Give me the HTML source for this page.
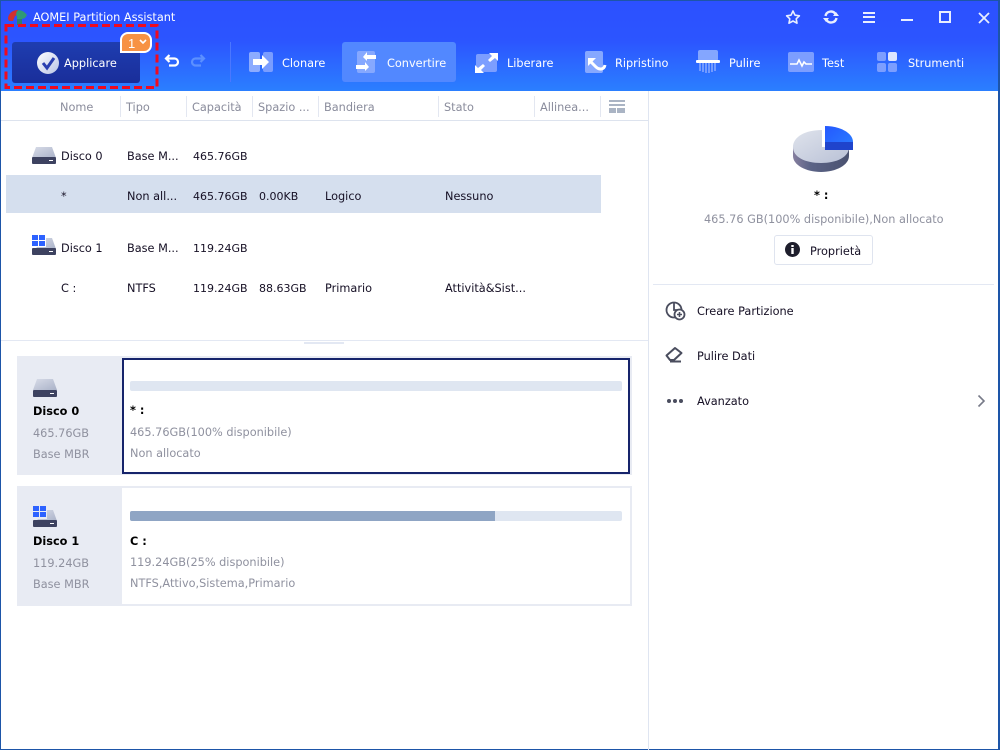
<!DOCTYPE html>
<html><head><meta charset="utf-8"><style>
html,body{margin:0;padding:0;width:1000px;height:750px;overflow:hidden;background:#fff}
body{position:relative;font-family:"DejaVu Sans","Liberation Sans",sans-serif;font-size:11.3px;color:#150f24}
.a,.t,svg{position:absolute}
.t{white-space:nowrap;line-height:16px;margin-top:1px}
.w{color:#fff}.h{color:#8a8c9c}.g{color:#8f919f}.b{font-weight:bold;color:#000}
.n{font-size:11px}
.s{width:1px;top:96px;height:21px;background:#e3e7f1}
</style></head><body>
<div class="a" style="left:0;top:0;width:1000px;height:91px;background:linear-gradient(#2c50ff 0,#2c55ff 45%,#2b7fff 100%)"></div>
<div class="a" style="left:0;top:0;width:1000px;height:1px;background:#1d55a8"></div>
<div class="a" style="left:0;top:0;width:1px;height:750px;background:#1d55a8"></div>
<div class="a" style="left:998px;top:0;width:2px;height:750px;background:#1d55a8"></div>
<div class="a" style="left:0;top:749px;width:1000px;height:1px;background:#1d55a8"></div>

<svg style="left:7px;top:8px" width="20" height="17" viewBox="0 0 20 17"><path d="M1 11C1 6 5 2 11 2L12 6 8 8 6 13 2 13Z" fill="#d0302f"/><path d="M10 3C13 1 17 3 20 7L18 10 15 11V15H10V9L9 6Z" fill="#2f9a75"/><path d="M10 11H15V17H10Z" fill="#2e7f6d"/></svg>
<div class="t w" style="left:33px;top:9px">AOMEI Partition Assistant</div>

<svg style="left:785px;top:9px" width="16" height="16" viewBox="0 0 16 16"><path d="M8 2L10 6.2 14.4 6.8 11.2 9.8 12 14.2 8 12 4 14.2 4.8 9.8 1.6 6.8 6 6.2Z" fill="none" stroke="#e8eeff" stroke-width="1.6" stroke-linejoin="round"/></svg>
<svg style="left:823px;top:9px" width="16" height="16" viewBox="0 0 16 16"><path d="M2.5 7A5.5 5.5 0 0 1 12.5 5M13.5 9A5.5 5.5 0 0 1 3.5 11" fill="none" stroke="#e8eeff" stroke-width="2.4"/><path d="M10 7H16L13 3ZM6 9H0L3 13Z" fill="#e8eeff"/></svg>
<div class="a" style="left:863px;top:12px;width:12px;height:2px;background:#e8eeff;box-shadow:0 4px 0 #e8eeff,0 9px 0 #e8eeff"></div>
<div class="a" style="left:901px;top:19px;width:12px;height:2px;background:#e8eeff"></div>
<div class="a" style="left:939px;top:11px;width:8px;height:8px;border:2px solid #e8eeff"></div>
<svg style="left:977px;top:11px" width="14" height="14" viewBox="0 0 14 14"><path d="M2 2L12 12M12 2L2 12" stroke="#e8eeff" stroke-width="1.8"/></svg>

<div class="a" style="left:12px;top:42px;width:128px;height:41px;border-radius:3px;background:linear-gradient(#1e3db0,#1a2e9a)"></div>
<svg style="left:37px;top:52px" width="22" height="22" viewBox="0 0 22 22"><defs><linearGradient id="c" x1="0" y1="0" x2="1" y2="1"><stop offset="0" stop-color="#fff"/><stop offset="1" stop-color="#b9c4e6"/></linearGradient></defs><circle cx="11" cy="11" r="11" fill="url(#c)"/><path d="M6 11L10 16 17 6" fill="none" stroke="#2a3fb0" stroke-width="3"/></svg>
<div class="t w" style="left:64px;top:55px">Applicare</div>
<div class="a" style="left:120px;top:32px;width:28px;height:17px;background:#f79244;border:2px solid #fff;border-radius:8px 8px 8px 0"></div>
<div class="t w" style="left:128px;top:35px;font-size:13px;font-family:'Liberation Sans',sans-serif">1</div>
<svg style="left:139px;top:39px" width="8" height="6" viewBox="0 0 8 6"><path d="M1 1L4 4 7 1" fill="none" stroke="#fff" stroke-width="1.6"/></svg>
<svg style="left:3px;top:23px" width="156" height="66"><rect x="3" y="2.5" width="151" height="62" fill="none" stroke="#f00a1e" stroke-width="3" stroke-dasharray="8 4"/></svg>

<svg style="left:164px;top:53px" width="16" height="15" viewBox="0 0 16 15"><path d="M5.5 2L2 5.5 5.5 9M2 5.5H10.5A3.5 3.5 0 0 1 10.5 12.5H5" fill="none" stroke="#fff" stroke-width="2.2"/></svg>
<svg style="left:190px;top:53px" width="16" height="15" viewBox="0 0 16 15"><path d="M10.5 2L14 5.5 10.5 9M14 5.5H5.5A3.5 3.5 0 0 0 5.5 12.5H11" fill="none" stroke="#5c90ff" stroke-width="2.2"/></svg>
<div class="a" style="left:230px;top:42px;width:1px;height:40px;background:#4b77ff"></div>

<svg style="left:249px;top:51px" width="25" height="22" viewBox="0 0 25 22"><rect x="0" y="1" width="11" height="20" rx="2" fill="#8cabff"/><rect x="14" y="1" width="10" height="20" rx="2" fill="#7a9dff"/><path d="M4 8H13V4L20 11 13 18V14H4Z" fill="#fff"/></svg>
<div class="t w" style="left:282px;top:55px">Clonare</div>

<div class="a" style="left:342px;top:42px;width:114px;height:40px;border-radius:3px;background:#5288ff"></div>
<svg style="left:356px;top:50px" width="22" height="24" viewBox="0 0 22 24"><rect x="1" y="1" width="18" height="22" rx="2" fill="#86a8ff"/><path d="M20 5H11V2L7 7 11 11V9H20ZM0 15H9V12L13 17 9 21V19H0Z" fill="#fff"/></svg>
<div class="t w" style="left:387px;top:55px">Convertire</div>

<svg style="left:475px;top:52px" width="24" height="22" viewBox="0 0 24 22"><rect x="1" y="2" width="21" height="18" rx="2" fill="#7c9eff"/><path d="M14 1H23V9L20 6 15 10 13 8 17 4ZM9 21H0V13L3 16 8 12 10 14 6 18Z" fill="#fff"/></svg>
<div class="t w" style="left:507px;top:55px">Liberare</div>

<svg style="left:584px;top:50px" width="23" height="24" viewBox="0 0 23 24"><rect x="1" y="1" width="18" height="22" rx="2" fill="#86a8ff"/><path d="M6 11L12 17C15 20 20 20 21 15" fill="none" stroke="#fff" stroke-width="3"/><path d="M4 8H12L4 16Z" fill="#fff"/></svg>
<div class="t w" style="left:615px;top:55px">Ripristino</div>

<svg style="left:695px;top:50px" width="26" height="24" viewBox="0 0 26 24"><rect x="3" y="0" width="20" height="11" rx="2" fill="#84a6ff"/><path d="M5 13V21M8 13V22M11 13V23M14 13V23M17 13V22M20 13V21" stroke="#84a6ff" stroke-width="1.6"/><rect x="1" y="10" width="24" height="3" rx="1" fill="#fff"/></svg>
<div class="t w" style="left:729px;top:55px">Pulire</div>

<svg style="left:788px;top:52px" width="26" height="20" viewBox="0 0 26 20"><rect x="0" y="0" width="26" height="20" rx="2" fill="#7c9eff"/><path d="M2 12H9L11 8 14 14 16 10 18 12H24" fill="none" stroke="#fff" stroke-width="1.6"/></svg>
<div class="t w" style="left:822px;top:55px">Test</div>

<svg style="left:877px;top:52px" width="20" height="20" viewBox="0 0 20 20"><rect x="0" y="0" width="9" height="9" rx="2" fill="#7c9eff"/><rect x="11" y="0" width="9" height="9" rx="2" fill="#dde5ff"/><rect x="0" y="11" width="9" height="9" rx="2" fill="#7c9eff"/><rect x="11" y="11" width="9" height="9" rx="2" fill="#7c9eff"/></svg>
<div class="t w" style="left:908px;top:55px">Strumenti</div>

<div class="t h" style="left:60px;top:99px">Nome</div>
<div class="t h" style="left:126px;top:99px">Tipo</div>
<div class="t h" style="left:192px;top:99px">Capacità</div>
<div class="t h" style="left:258px;top:99px">Spazio ...</div>
<div class="t h" style="left:324px;top:99px">Bandiera</div>
<div class="t h" style="left:444px;top:99px">Stato</div>
<div class="t h" style="left:540px;top:99px">Allinea...</div>
<div class="a s" style="left:120px"></div><div class="a s" style="left:186px"></div><div class="a s" style="left:252px"></div><div class="a s" style="left:318px"></div><div class="a s" style="left:438px"></div><div class="a s" style="left:534px"></div><div class="a s" style="left:600px"></div>
<svg style="left:609px;top:100px" width="16" height="13" viewBox="0 0 16 13"><path d="M0 0H16V2H0ZM0 4H16V6H0ZM0 8H7V13H0ZM8 8H16V13H8Z" fill="#aab4c4"/></svg>
<div class="a" style="left:1px;top:120px;width:647px;height:1px;background:#dde3ee"></div>
<div class="a" style="left:648px;top:91px;width:1px;height:659px;background:#dfe5f1"></div>

<div class="a" style="left:6px;top:175px;width:595px;height:38px;background:#d5dfee"></div>

<svg style="left:32px;top:146px" width="24" height="18" viewBox="0 0 24 18"><defs><linearGradient id="d" x1="0" y1="0" x2="1" y2="1"><stop offset="0" stop-color="#d8dce8"/><stop offset="1" stop-color="#aab2c8"/></linearGradient></defs><path d="M4 1H20L24 12H0Z" fill="url(#d)"/><rect x="0" y="11" width="24" height="7" rx="1" fill="#3d4260"/><rect x="17" y="14" width="4" height="1" fill="#fff"/></svg>
<div class="t" style="left:61px;top:148px">Disco 0</div>
<div class="t" style="left:127px;top:148px">Base M...</div>
<div class="t n" style="left:193px;top:148px">465.76GB</div>

<div class="t" style="left:61px;top:188px">*</div>
<div class="t" style="left:127px;top:188px">Non all...</div>
<div class="t n" style="left:193px;top:188px">465.76GB</div>
<div class="t n" style="left:259px;top:188px">0.00KB</div>
<div class="t" style="left:325px;top:188px">Logico</div>
<div class="t" style="left:445px;top:188px">Nessuno</div>

<svg style="left:32px;top:235px" width="24" height="20" viewBox="0 0 24 20"><path d="M8 3H20L24 14H4Z" fill="url(#d)"/><rect x="0" y="13" width="24" height="7" rx="1" fill="#3d4260"/><rect x="17" y="16" width="4" height="1" fill="#fff"/><rect x="0" y="0" width="14" height="12" fill="#fff"/><path d="M0 0H6V5H0ZM7 0H13V5H7ZM0 6H6V11H0ZM7 6H13V11H7Z" fill="#2d62ff"/></svg>
<div class="t" style="left:61px;top:240px">Disco 1</div>
<div class="t" style="left:127px;top:240px">Base M...</div>
<div class="t n" style="left:193px;top:240px">119.24GB</div>

<div class="t" style="left:61px;top:280px">C :</div>
<div class="t" style="left:127px;top:280px">NTFS</div>
<div class="t n" style="left:193px;top:280px">119.24GB</div>
<div class="t n" style="left:259px;top:280px">88.63GB</div>
<div class="t" style="left:325px;top:280px">Primario</div>
<div class="t" style="left:445px;top:280px">Attività&amp;Sist...</div>

<div class="a" style="left:1px;top:340px;width:647px;height:1px;background:#e3e8f3"></div>
<div class="a" style="left:304px;top:342px;width:40px;height:2px;background:#e3e8f3"></div>

<div class="a" style="left:17px;top:356px;width:615px;height:119px;background:#e8ebf3"></div>
<div class="a" style="left:122px;top:358px;width:504px;height:112px;background:#fff;border:2px solid #16246b"></div>
<svg style="left:33px;top:379px" width="24" height="18" viewBox="0 0 24 18"><path d="M4 0H20L24 11H0Z" fill="url(#d)"/><rect x="0" y="11" width="24" height="7" rx="1" fill="#3d4260"/><rect x="17" y="14" width="4" height="1" fill="#fff"/></svg>
<div class="t b" style="left:33px;top:403px">Disco 0</div>
<div class="t g" style="left:33px;top:425px">465.76GB</div>
<div class="t g" style="left:33px;top:446px">Base MBR</div>
<div class="a" style="left:130px;top:381px;width:492px;height:10px;border-radius:2px;background:#dfe6f1"></div>
<div class="t b" style="left:130px;top:402px">* :</div>
<div class="t g" style="left:130px;top:424px">465.76GB(100% disponibile)</div>
<div class="t g" style="left:130px;top:445px">Non allocato</div>

<div class="a" style="left:17px;top:486px;width:615px;height:120px;background:#e8ebf3"></div>
<div class="a" style="left:122px;top:488px;width:508px;height:116px;background:#fff"></div>
<svg style="left:33px;top:506px" width="24" height="21" viewBox="0 0 24 21"><path d="M8 4H20L24 15H4Z" fill="url(#d)"/><rect x="0" y="14" width="24" height="7" rx="1" fill="#3d4260"/><rect x="17" y="17" width="4" height="1" fill="#fff"/><rect x="0" y="0" width="14" height="13" fill="#e8ebf3"/><path d="M0 0H6V5H0ZM7 0H13V5H7ZM0 6H6V11H0ZM7 6H13V11H7Z" fill="#2d62ff"/></svg>
<div class="t b" style="left:33px;top:533px">Disco 1</div>
<div class="t g" style="left:33px;top:555px">119.24GB</div>
<div class="t g" style="left:33px;top:576px">Base MBR</div>
<div class="a" style="left:130px;top:511px;width:492px;height:10px;border-radius:2px;background:#dfe6f1"></div>
<div class="a" style="left:130px;top:511px;width:365px;height:10px;border-radius:2px 0 0 2px;background:#8fa5c4"></div>
<div class="t b" style="left:130px;top:533px">C :</div>
<div class="t g" style="left:130px;top:554px">119.24GB(25% disponibile)</div>
<div class="t g" style="left:130px;top:575px">NTFS,Attivo,Sistema,Primario</div>

<svg style="left:790px;top:124px" width="64" height="50" viewBox="0 0 64 50"><defs><linearGradient id="p1" x1="0" y1="0" x2="1" y2="1"><stop offset="0" stop-color="#dfe3ec"/><stop offset="1" stop-color="#b9c1d6"/></linearGradient><linearGradient id="p2" x1="0" y1="0" x2="1" y2="0"><stop offset="0" stop-color="#867f9f"/><stop offset=".3" stop-color="#5c6487"/><stop offset="1" stop-color="#4a5270"/></linearGradient><linearGradient id="p3" x1="0" y1="0" x2="1" y2="1"><stop offset="0" stop-color="#2458ff"/><stop offset="1" stop-color="#2b7fff"/></linearGradient></defs><path d="M3 23V32C3 41 16 48 31 48 46 48 59 41 59 32V23Z" fill="url(#p2)"/><path d="M32 6C15 6 3 13 3 23 3 33 15 39 31 39 47 39 59 33 59 23H32Z" fill="url(#p1)"/><path d="M35 2C50 2 63 9 63 18V26H35Z" fill="url(#p3)"/><path d="M35 18H63V26H35Z" fill="#1f44cc"/></svg>
<div class="t" style="left:814px;top:187px;font-weight:bold;color:#000">* :</div>
<div class="t g" style="left:704px;top:211px">465.76 GB(100% disponibile),Non allocato</div>
<div class="a" style="left:774px;top:235px;width:97px;height:28px;border:1px solid #dfe4ef;border-radius:3px"></div>
<svg style="left:785px;top:242px" width="15" height="15" viewBox="0 0 15 15"><circle cx="7.5" cy="7.5" r="7.5" fill="#1e1e2c"/><rect x="6.3" y="6" width="2.4" height="6" fill="#fff"/><rect x="6.3" y="3" width="2.4" height="2" fill="#fff"/></svg>
<div class="t" style="left:810px;top:243px">Proprietà</div>
<div class="a" style="left:653px;top:284px;width:341px;height:1px;background:#e3e8f3"></div>

<svg style="left:665px;top:300px" width="21" height="21" viewBox="0 0 21 21"><circle cx="9" cy="10" r="7.5" fill="none" stroke="#4a4d5e" stroke-width="1.8"/><path d="M9 3V10H16.5" fill="none" stroke="#4a4d5e" stroke-width="1.8"/><circle cx="14.5" cy="14.5" r="5" fill="#fff" stroke="#4a4d5e" stroke-width="1.8"/><path d="M12 14.5H17M14.5 12V17" stroke="#4a4d5e" stroke-width="1.6"/></svg>
<div class="t" style="left:697px;top:303px">Creare Partizione</div>
<svg style="left:665px;top:346px" width="20" height="18" viewBox="0 0 20 18"><path d="M1.5 9.5L10 2 16.5 7 9 14 5 14Z" fill="none" stroke="#4a4d5e" stroke-width="2" stroke-linejoin="round"/><path d="M5 15.5H16" stroke="#4a4d5e" stroke-width="2"/></svg>
<div class="t" style="left:697px;top:348px">Pulire Dati</div>
<div class="a" style="left:667px;top:399px;width:4px;height:4px;border-radius:2px;background:#4a4d5e;box-shadow:6px 0 0 #4a4d5e,12px 0 0 #4a4d5e"></div>
<div class="t" style="left:697px;top:393px">Avanzato</div>
<svg style="left:977px;top:394px" width="9" height="14" viewBox="0 0 9 14"><path d="M1.5 1.5L7 7 1.5 12.5" fill="none" stroke="#777a88" stroke-width="1.6"/></svg>
</body></html>
